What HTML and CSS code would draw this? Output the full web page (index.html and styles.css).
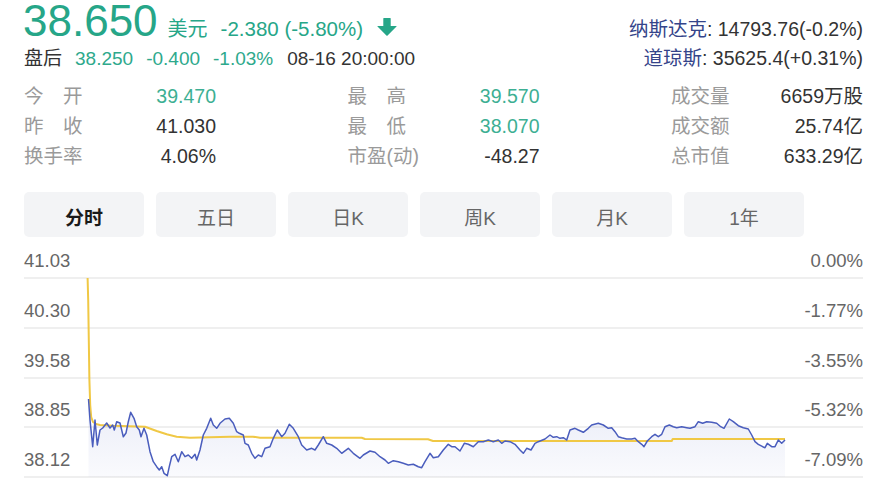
FILE: index.html
```html
<!DOCTYPE html>
<html lang="zh-CN">
<head>
<meta charset="utf-8">
<title>行情</title>
<link rel="stylesheet" href="styles.css">
</head>
<body>
<div class="page">
  <header class="quote">
    <div class="quote-row">
      <div class="price-main">
        <span class="price">38.650</span>
        <span class="currency">美元</span>
        <span class="change">-2.380 (-5.80%)</span>
        <svg class="arrow" width="20" height="18" viewBox="0 0 20 18"><path d="M6.3 0.5 Q6.3 0 6.8 0 H13.2 Q13.7 0 13.7 0.5 V8 H19.3 Q20 8 19.5 8.6 L10.6 17.4 Q10 18 9.4 17.4 L0.5 8.6 Q0 8 0.7 8 H6.3 Z" fill="#26a688"/></svg>
      </div>
      <div class="index"><span class="index-name">纳斯达克</span>: 14793.76(-0.2%)</div>
    </div>
    <div class="sub-row">
      <div class="after-hours">
        <span class="ah-label">盘后</span>
        <span class="down">38.250</span>
        <span class="down">-0.400</span>
        <span class="down">-1.03%</span>
        <span class="ah-time">08-16 20:00:00</span>
      </div>
      <div class="index"><span class="index-name">道琼斯</span>: 35625.4(+0.31%)</div>
    </div>
  </header>

  <section class="stats">
    <div class="stat-col">
      <div class="stat"><span class="stat-label">今　开</span><span class="stat-value down">39.470</span></div>
      <div class="stat"><span class="stat-label">昨　收</span><span class="stat-value">41.030</span></div>
      <div class="stat"><span class="stat-label">换手率</span><span class="stat-value">4.06%</span></div>
    </div>
    <div class="stat-col">
      <div class="stat"><span class="stat-label">最　高</span><span class="stat-value down">39.570</span></div>
      <div class="stat"><span class="stat-label">最　低</span><span class="stat-value down">38.070</span></div>
      <div class="stat"><span class="stat-label">市盈(动)</span><span class="stat-value">-48.27</span></div>
    </div>
    <div class="stat-col">
      <div class="stat"><span class="stat-label">成交量</span><span class="stat-value">6659万股</span></div>
      <div class="stat"><span class="stat-label">成交额</span><span class="stat-value">25.74亿</span></div>
      <div class="stat"><span class="stat-label">总市值</span><span class="stat-value">633.29亿</span></div>
    </div>
  </section>

  <nav class="tabs">
    <div class="tab active">分时</div>
    <div class="tab">五日</div>
    <div class="tab">日K</div>
    <div class="tab">周K</div>
    <div class="tab">月K</div>
    <div class="tab">1年</div>
  </nav>

  <section class="chart">
    <div class="grid-row first"><span>41.03</span><span>0.00%</span></div>
    <div class="grid-row"><span>40.30</span><span>-1.77%</span></div>
    <div class="grid-row"><span>39.58</span><span>-3.55%</span></div>
    <div class="grid-row"><span>38.85</span><span>-5.32%</span></div>
    <div class="grid-row"><span>38.12</span><span>-7.09%</span></div>
    <svg class="plot" width="839" height="233" viewBox="24 245 839 233">
      <defs>
        <linearGradient id="area" x1="0" y1="0" x2="0" y2="1">
          <stop offset="0" stop-color="#5568c4" stop-opacity="0.13"/>
          <stop offset="1" stop-color="#5568c4" stop-opacity="0.03"/>
        </linearGradient>
      </defs>
      <polygon fill="url(#area)" points="88.5,399 90,420 92.7,446.7 95,420 97.3,445 100,430 102.7,428 106.7,423 110,428 112.7,425 114.3,430 116.7,421.7 120,423 123.3,436.7 126,433 128.3,421.7 130.7,412.3 134,418.3 136.7,426.7 139.3,430 141,436.7 144,428.3 146.7,435 150,451.7 153.3,461.7 156.7,466.7 159.3,470 161.7,466.7 164,473.3 167.3,475.7 169.3,466.7 171.7,456.7 175,454.3 178.3,461.7 181.7,451.7 185,456.7 188.3,455 191.7,458.3 195,454.3 196.7,460 200,450 203.3,435 206.7,428.3 210.7,418.3 213.3,425 216.7,428.3 220,423.3 225,419 229.3,418.3 233.3,423.3 236.7,431.7 239.3,433.3 243.3,435 245,443.3 248.3,445 251.7,453.3 255,458.3 258.3,455 261.7,456.7 265,448.3 270,446.7 273.3,438.3 277.3,430 281.7,436.7 285,433.3 289.3,424.3 293.3,428.3 298.3,436.7 301.7,445 306.7,450 311.7,448.3 315,450 318.3,445 323.3,436.7 326.7,443.3 331.7,445 336.7,448.3 341.7,453.3 348.3,448.3 353.3,453.3 360,458.3 363.3,455 370,451 375,452.3 380,456.7 385,460 388.3,463.3 393.3,460.7 398.3,461.7 403.3,463.3 408.3,465 413.3,464.3 418.3,466.7 421.7,467.7 425,461.7 430,453.3 433.3,457.7 438.3,456.7 443.3,450 448.3,444.3 451.7,446.7 455,446.7 460,451 464.3,443.3 468.3,444.3 473.3,446.7 478.3,441.7 483.3,441.7 488.3,440 493.3,441.7 498.3,440 501.7,443.3 505,441 510,441.7 515,444.3 520,450 523.3,453.3 526.7,448.3 531,450 535,443.3 538.3,441.7 545,439 550,435 553.3,437.3 556.7,436.7 560,438.3 563.3,437.7 566.7,440 570,430 575,428.3 578.3,430 583.3,432.3 588.3,428.3 591.7,425 598.3,423.3 603.3,425 608.3,428.3 611.7,427.7 615,431.7 618.3,436.7 621.7,437.7 626.7,439 631.7,439 635,438.3 638.3,441.7 641.7,444.3 644,446.7 647.3,441 651.7,436.7 655,434.3 658.3,436.7 661.7,434.3 665,426.7 669.3,425 673.3,426.7 676.7,427.7 681.7,426.7 686.7,427.7 690,428.3 695,426.7 698.3,421.7 702.7,423.3 706.7,421.7 711.7,422.3 716.7,423.3 720.7,426.7 724,428.3 729.3,419 733.3,421.7 738.3,425.7 743.3,427.7 748.3,429 751.7,435 755,441.7 758.3,444.3 762.7,446.7 765,447.7 767.3,443.3 771.7,446.7 775,446.7 778.3,440 781.7,443.3 785,440 785,477 88.5,477"/>
      <polyline class="avg-line" points="87.6,278 88.2,300 88.8,340 89.4,380 90.2,405 91.2,417 93,422 96,424 100,425 113,425.7 145,426.7 156.7,431 166.7,434.3 176.7,436.7 190,437.7 230,436.7 253,436.7 260,437.7 315,437.7 361.7,437.7 365,439 428,439.3 433,441 671.7,441 672.7,439 785,439"/>
      <polyline class="price-line" points="88.5,399 90,420 92.7,446.7 95,420 97.3,445 100,430 102.7,428 106.7,423 110,428 112.7,425 114.3,430 116.7,421.7 120,423 123.3,436.7 126,433 128.3,421.7 130.7,412.3 134,418.3 136.7,426.7 139.3,430 141,436.7 144,428.3 146.7,435 150,451.7 153.3,461.7 156.7,466.7 159.3,470 161.7,466.7 164,473.3 167.3,475.7 169.3,466.7 171.7,456.7 175,454.3 178.3,461.7 181.7,451.7 185,456.7 188.3,455 191.7,458.3 195,454.3 196.7,460 200,450 203.3,435 206.7,428.3 210.7,418.3 213.3,425 216.7,428.3 220,423.3 225,419 229.3,418.3 233.3,423.3 236.7,431.7 239.3,433.3 243.3,435 245,443.3 248.3,445 251.7,453.3 255,458.3 258.3,455 261.7,456.7 265,448.3 270,446.7 273.3,438.3 277.3,430 281.7,436.7 285,433.3 289.3,424.3 293.3,428.3 298.3,436.7 301.7,445 306.7,450 311.7,448.3 315,450 318.3,445 323.3,436.7 326.7,443.3 331.7,445 336.7,448.3 341.7,453.3 348.3,448.3 353.3,453.3 360,458.3 363.3,455 370,451 375,452.3 380,456.7 385,460 388.3,463.3 393.3,460.7 398.3,461.7 403.3,463.3 408.3,465 413.3,464.3 418.3,466.7 421.7,467.7 425,461.7 430,453.3 433.3,457.7 438.3,456.7 443.3,450 448.3,444.3 451.7,446.7 455,446.7 460,451 464.3,443.3 468.3,444.3 473.3,446.7 478.3,441.7 483.3,441.7 488.3,440 493.3,441.7 498.3,440 501.7,443.3 505,441 510,441.7 515,444.3 520,450 523.3,453.3 526.7,448.3 531,450 535,443.3 538.3,441.7 545,439 550,435 553.3,437.3 556.7,436.7 560,438.3 563.3,437.7 566.7,440 570,430 575,428.3 578.3,430 583.3,432.3 588.3,428.3 591.7,425 598.3,423.3 603.3,425 608.3,428.3 611.7,427.7 615,431.7 618.3,436.7 621.7,437.7 626.7,439 631.7,439 635,438.3 638.3,441.7 641.7,444.3 644,446.7 647.3,441 651.7,436.7 655,434.3 658.3,436.7 661.7,434.3 665,426.7 669.3,425 673.3,426.7 676.7,427.7 681.7,426.7 686.7,427.7 690,428.3 695,426.7 698.3,421.7 702.7,423.3 706.7,421.7 711.7,422.3 716.7,423.3 720.7,426.7 724,428.3 729.3,419 733.3,421.7 738.3,425.7 743.3,427.7 748.3,429 751.7,435 755,441.7 758.3,444.3 762.7,446.7 765,447.7 767.3,443.3 771.7,446.7 775,446.7 778.3,440 781.7,443.3 785,440"/>
    </svg>
  </section>
</div>
</body>
</html>
```

FILE: styles.css
```css
* { box-sizing: border-box; }

html, body {
  margin: 0;
  padding: 0;
  background: #ffffff;
}

body {
  font-family: "Liberation Sans", "Noto Sans CJK SC", sans-serif;
  color: #333333;
  overflow: hidden;
}

.page {
  width: 895px;
  height: 480px;
  padding: 0 32px 0 24px;
}

/* ---------- header ---------- */
.quote-row,
.sub-row {
  display: flex;
  justify-content: space-between;
  align-items: baseline;
}

.quote-row { height: 42px; }
.sub-row { height: 32px; }

.price-main {
  display: flex;
  align-items: baseline;
  color: #26a688;
}

.price {
  font-size: 44px;
  line-height: 42px;
  margin-left: -1px;
}

.currency {
  font-size: 20px;
  margin-left: 10px;
}

.change {
  font-size: 20.5px;
  margin-left: 13px;
}

.arrow {
  flex-shrink: 0;
  width: 20px;
  height: 18px;
  margin-left: 14px;
  margin-bottom: -1.5px;
  align-self: baseline;
}

.index {
  font-size: 19.5px;
  line-height: 32px;
  color: #333333;
}

.index-name { color: #34448a; }

.after-hours {
  display: flex;
  align-items: baseline;
  gap: 13px;
  font-size: 19px;
  line-height: 32px;
}

.ah-label { color: #333333; }
.ah-time { color: #333333; margin-left: 1px; }

.down { color: #2ea98c; }

/* ---------- stats ---------- */
.stats {
  margin-top: 7px;
  display: flex;
  justify-content: space-between;
}

.stat-col { width: 192px; }

.stat {
  display: flex;
  justify-content: space-between;
  align-items: baseline;
  font-size: 19.5px;
  line-height: 30px;
}

.stat-label { color: #9a9a9a; }
.stat-value { color: #333333; }
.stat-value.down { color: #3daf93; }

/* ---------- tabs ---------- */
.tabs {
  margin-top: 21px;
  display: flex;
  gap: 12px;
}

.tab {
  width: 120px;
  height: 45px;
  padding-top: 3px;
  border-radius: 5px;
  background: #f3f4f6;
  display: flex;
  align-items: center;
  justify-content: center;
  font-size: 19px;
  color: #666666;
}

.tab.active {
  color: #1a1a1a;
  font-weight: bold;
}

/* ---------- chart ---------- */
.chart {
  position: relative;
  margin-top: 8px;
  height: 233px;
}

.grid-row {
  height: 49.75px;
  display: flex;
  justify-content: space-between;
  align-items: flex-end;
  padding-bottom: 6px;
  border-bottom: 2px solid #efefef;
  font-size: 18.5px;
  line-height: 20px;
  color: #666666;
}

.grid-row.first { height: 34px; }

.plot {
  position: absolute;
  left: 0;
  top: 0;
}

.price-line {
  fill: none;
  stroke: #4a5dbd;
  stroke-width: 1.5;
  stroke-linejoin: round;
}

.avg-line {
  fill: none;
  stroke: #f0c845;
  stroke-width: 2;
  stroke-linejoin: round;
}
```
